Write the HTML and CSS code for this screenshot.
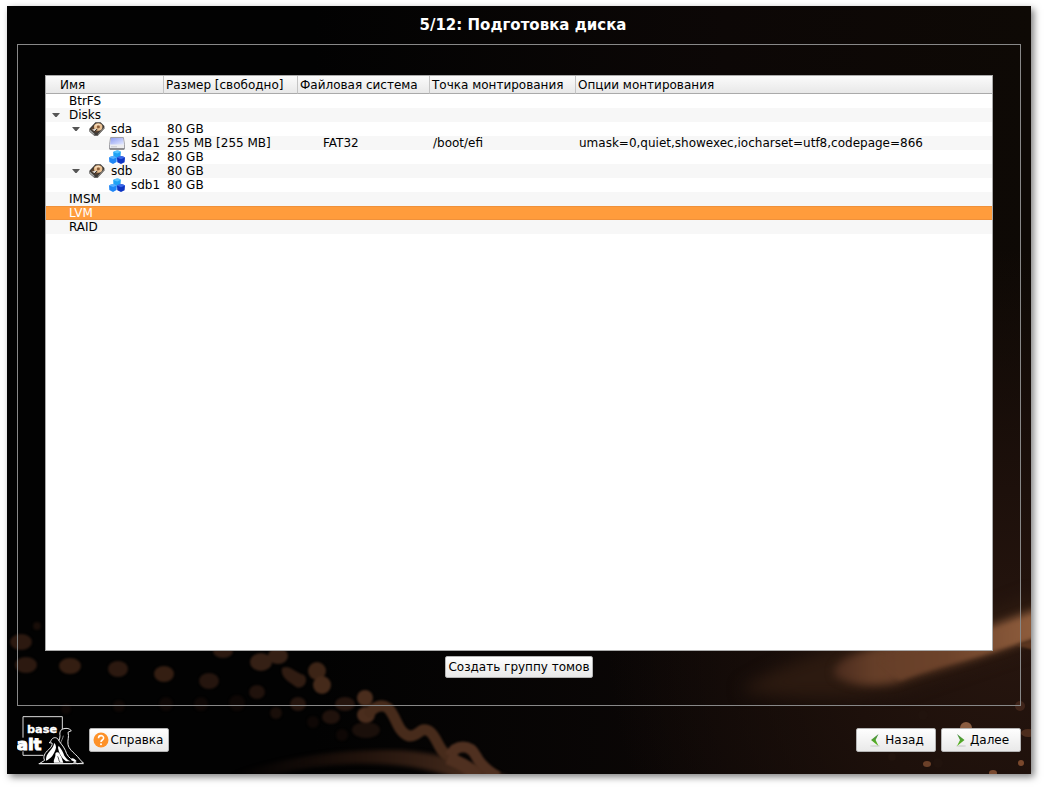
FILE: index.html
```html
<!DOCTYPE html>
<html lang="ru">
  <head>
    <meta charset="UTF-8" />
    <meta name="viewport" content="width=device-width, initial-scale=1.0" />
    <title>Подготовка диска</title>
    <link rel="stylesheet" href="styles.css">
  </head>
  <body>
    <!-- Общие значки -->
    <svg class="sprite" aria-hidden="true">
      <defs>
        <linearGradient id="gDrive" x1="0" y1="0" x2="1" y2="1">
          <stop offset="0" stop-color="#8d9cf0" />
          <stop offset="1" stop-color="#e4e9ff" />
        </linearGradient>
        <linearGradient id="gArrow" x1="0" y1="0" x2="0" y2="1">
          <stop offset="0" stop-color="#4b8a4b" />
          <stop offset="1" stop-color="#57bb12" />
        </linearGradient>
      </defs>
      <symbol id="disk" viewBox="0 0 16 14">
        <path d="M0.4 6.8 L6.4 0.2 L11.6 0.2 L15.4 4 L15.4 6.6 L8.8 13.8 L5.2 13.8 L0.4 9.6 Z" fill="#3c3a38" />
        <path d="M0.8 7.6 L5.4 11.8 L5.4 13.2 L0.8 9.4 Z" fill="#a9a9a6" />
        <path d="M8.8 12 L15.2 5.2 L15.2 6.6 L8.8 13.4 Z" fill="#8d8882" />
        <path d="M1.8 7 L7 1.2 L11.2 1.2 L14 4.2 L8.6 10.6 L5.8 10.6 Z" fill="#5d432e" />
        <ellipse cx="9.2" cy="5" rx="4.2" ry="3.7" fill="#e9c194" />
        <path d="M6.2 4.4 A3.2 2.8 0 0 1 11 2.8" fill="none" stroke="#fbe6cc" stroke-width="1" />
        <ellipse cx="9.4" cy="4.9" rx="1.5" ry="1.3" fill="#8a5c38" />
        <path d="M3 7.6 L7.6 6.6 L6 9.6 Z" fill="#dcd8d4" />
        <path d="M5.4 9.8 L8.4 6.8" stroke="#1e1c1a" stroke-width="1" />
      </symbol>
      <symbol id="part" viewBox="0 0 16 14">
        <path d="M1.6 1.5 H14.4 L15.5 8.5 V13 H0.5 V8.5 Z" fill="#ececef" stroke="#8d8d93" stroke-width="0.8" />
        <path d="M2 2 H14 L14.8 8.4 H1.2 Z" fill="url(#gDrive)" />
        <path d="M0.8 13 H15.2" stroke="#66666a" stroke-width="1.2" />
        <path d="M2 10.8 H8" stroke="#c6c6cc" stroke-width="1" />
      </symbol>
      <symbol id="cubes" viewBox="0 0 16 14">
        <path d="M4.2 2 Q8 -1 11.8 1.8 L11.6 6 L8 7.8 L4.4 6.2 Z" fill="#1fa2f5" />
        <path d="M4.2 2 Q8 -1 11.8 1.8 L8.2 3.4 Z" fill="#58c4ff" />
        <path d="M0 7.4 Q3.6 5 7.9 7.2 L7.6 12 L4 14 L0.3 12 Z" fill="#1f86f6" />
        <path d="M0 7.4 Q3.6 5 7.9 7.2 L4.2 9 Z" fill="#55b0ff" />
        <path d="M8 7.6 Q12 5 16 7.4 L15.6 12.2 L12 14 L8.3 12.2 Z" fill="#0d34c2" />
        <path d="M8 7.6 Q12 5 16 7.4 L12 9.2 Z" fill="#3a68ea" />
      </symbol>
      <symbol id="toggle" viewBox="0 0 8 4">
        <path d="M0 0 H8 L4.6 4 H3.4 Z" fill="#555" />
      </symbol>
    </svg>

    <div class="window">
      <svg class="backdrop" viewBox="7 6 1024 768" preserveAspectRatio="xMidYMax slice" aria-hidden="true">
        <defs>
          <linearGradient id="gBase" x1="0" y1="0" x2="1" y2="0">
            <stop offset="0.3" stop-color="#0c0807" stop-opacity="0" />
            <stop offset="0.7" stop-color="#0c0706" />
            <stop offset="1" stop-color="#0e0905" />
          </linearGradient>
          <radialGradient id="gGlow" cx="1010" cy="650" r="400" gradientUnits="userSpaceOnUse">
            <stop offset="0" stop-color="#26150e" />
            <stop offset="0.4" stop-color="#1d100b" />
            <stop offset="1" stop-color="#1d100b" stop-opacity="0" />
          </radialGradient>
          <linearGradient id="gStreak" x1="820" y1="0" x2="1031" y2="0" gradientUnits="userSpaceOnUse">
            <stop offset="0" stop-color="#41251a" />
            <stop offset="0.25" stop-color="#653e28" />
            <stop offset="0.6" stop-color="#6d432b" />
            <stop offset="1" stop-color="#8d5c3c" />
          </linearGradient>
          <linearGradient id="gArc" x1="230" y1="0" x2="500" y2="0" gradientUnits="userSpaceOnUse">
            <stop offset="0" stop-color="#1c0f0a" stop-opacity="0" />
            <stop offset="0.5" stop-color="#22130c" />
            <stop offset="1" stop-color="#4d3020" />
          </linearGradient>
          <filter id="b1" color-interpolation-filters="sRGB"><feGaussianBlur stdDeviation="1" /></filter>
          <filter id="b2" color-interpolation-filters="sRGB"><feGaussianBlur stdDeviation="2" /></filter>
          <filter id="b3" color-interpolation-filters="sRGB"><feGaussianBlur stdDeviation="4" /></filter>
          <filter id="b8" color-interpolation-filters="sRGB"><feGaussianBlur stdDeviation="8" /></filter>
        </defs>
        <rect x="7" y="6" width="1024" height="768" fill="#020202" />
        <rect x="7" y="6" width="1024" height="768" fill="url(#gBase)" />
        <rect x="600" y="250" width="431" height="524" fill="url(#gGlow)" />

        <path d="M740 690 C800 650 900 630 990 612 L1045 590 L1045 640 L900 690 C850 700 790 700 740 690 Z" fill="#2c1a10" filter="url(#b8)" />
        <path d="M834 675 C832 660 856 652 890 644 L990 626 L1045 606 L1045 634 L993 652 C960 664 925 672 898 682 C876 688 846 686 834 675 Z" fill="url(#gStreak)" filter="url(#b3)" />
        <path d="M880 660 L990 632 L1045 613 L1045 634 L993 651 C955 662 930 668 900 680 Z" fill="url(#gStreak)" filter="url(#b2)" />
        <path d="M1016 645 L1040 638 V652 Z" fill="#5a351f" filter="url(#b1)" />

        <g fill="#2c1910" filter="url(#b1)">
          <circle cx="37" cy="626" r="4" fill="#180d08" />
          <ellipse cx="21" cy="642" rx="11" ry="8" />
          <ellipse cx="26" cy="665" rx="11" ry="8" />
          <ellipse cx="70" cy="666" rx="11" ry="8" fill="#341e12" />
          <ellipse cx="118" cy="669" rx="10" ry="8" />
          <ellipse cx="164" cy="674" rx="10" ry="8" fill="#341e12" />
          <ellipse cx="209" cy="681" rx="10" ry="8" fill="#25150e" />
          <ellipse cx="223" cy="651" rx="10" ry="7" />
          <ellipse cx="261" cy="662" rx="11" ry="9" fill="#352015" />
          <ellipse cx="278" cy="656" rx="10" ry="8" fill="#352015" />
          <path d="M282 668 C290 664 294 672 304 675 C310 682 302 690 296 687 C290 682 280 678 282 668 Z" fill="#301c12" />
          <ellipse cx="317" cy="671" rx="9" ry="9" fill="#3c2416" />
          <ellipse cx="322" cy="685" rx="9" ry="9" fill="#452a1a" />
          <ellipse cx="257" cy="692" rx="8" ry="7" fill="#20120c" />
          <ellipse cx="298" cy="704" rx="8" ry="7" fill="#25150e" />
          <ellipse cx="345" cy="704" rx="10" ry="7" fill="#25150e" />
          <ellipse cx="331" cy="717" rx="9" ry="7" fill="#20120c" />
          <g fill="#0e0705">
            <circle cx="66" cy="709" r="5" />
            <circle cx="119" cy="706" r="6" />
            <circle cx="166" cy="704" r="7" />
            <circle cx="201" cy="704" r="7" />
            <circle cx="237" cy="703" r="8" />
            <circle cx="276" cy="713" r="6" fill="#190e09" />
            <circle cx="313" cy="722" r="6" />
            <circle cx="342" cy="735" r="6" />
            <ellipse cx="366" cy="730" rx="14" ry="8" fill="#1a0f0a" />
          </g>
        </g>

        <path d="M230 775 C290 756 340 750 390 750 C430 750 470 762 510 778 L455 778 C420 766 390 763 350 764 C310 766 290 770 270 776 Z" fill="url(#gArc)" filter="url(#b2)" />
        <g filter="url(#b1)">
          <circle cx="365" cy="698" r="8" fill="#4a2d1d" />
          <ellipse cx="366" cy="715" rx="9" ry="8" fill="#4a2d1d" />
          <path d="M370 712 C376 706 382 704 388 708 C397 717 397 732 409 736 C419 737 420 726 429 731 C438 737 438 752 450 757" fill="none" stroke="#472b1b" stroke-width="11" stroke-linecap="round" />
          <path d="M450 756 C456 744 470 744 476 756 C480 764 486 770 498 777" fill="none" stroke="#4f3020" stroke-width="11" />
          <path d="M448 758 C458 762 468 766 478 777" fill="none" stroke="#4f3020" stroke-width="13" />
        </g>

        <g fill="#4c2c1c">
          <circle cx="1020" cy="706" r="5" fill="#40251a" />
          <ellipse cx="966" cy="728" rx="6" ry="6" fill="#8a5c40" />
          <ellipse cx="1028" cy="733" rx="7" ry="4" />
          <ellipse cx="927" cy="764" rx="4" ry="3" fill="#6b4029" />
          <circle cx="1021" cy="763" r="3" fill="#7a482c" />
          <ellipse cx="993" cy="773" rx="4" ry="3" fill="#7a4a30" />
          <g fill="#21130d">
            <circle cx="923" cy="715" r="5" />
            <circle cx="892" cy="757" r="4" />
            <circle cx="938" cy="763" r="5" />
          </g>
        </g>
      </svg>

      <h1 class="title">5/12: Подготовка диска</h1>

      <main class="frame">
        <div class="tree">
          <table>
            <colgroup>
              <col class="col-name">
              <col class="col-size">
              <col class="col-fs">
              <col class="col-mount">
              <col>
            </colgroup>
            <thead>
              <tr>
                <th>Имя</th>
                <th>Размер [свободно]</th>
                <th>Файловая система</th>
                <th>Точка монтирования</th>
                <th>Опции монтирования</th>
              </tr>
            </thead>
            <tbody>
              <tr>
                <td><div class="node">BtrFS</div></td>
                <td></td><td></td><td></td><td></td>
              </tr>
              <tr>
                <td><div class="node"><button class="toggle" aria-label="Свернуть Disks"><svg><use href="#toggle" /></svg></button>Disks</div></td>
                <td></td><td></td><td></td><td></td>
              </tr>
              <tr>
                <td><div class="node level1"><button class="toggle" aria-label="Свернуть sda"><svg><use href="#toggle" /></svg></button><svg class="icon"><use href="#disk" /></svg>sda</div></td>
                <td>80 GB</td><td></td><td></td><td></td>
              </tr>
              <tr>
                <td><div class="node level2"><svg class="icon"><use href="#part" /></svg>sda1</div></td>
                <td>255 MB [255 MB]</td><td class="fs">FAT32</td><td>/boot/efi</td><td>umask=0,quiet,showexec,iocharset=utf8,codepage=866</td>
              </tr>
              <tr>
                <td><div class="node level2"><svg class="icon"><use href="#cubes" /></svg>sda2</div></td>
                <td>80 GB</td><td></td><td></td><td></td>
              </tr>
              <tr>
                <td><div class="node level1"><button class="toggle" aria-label="Свернуть sdb"><svg><use href="#toggle" /></svg></button><svg class="icon"><use href="#disk" /></svg>sdb</div></td>
                <td>80 GB</td><td></td><td></td><td></td>
              </tr>
              <tr>
                <td><div class="node level2"><svg class="icon"><use href="#cubes" /></svg>sdb1</div></td>
                <td>80 GB</td><td></td><td></td><td></td>
              </tr>
              <tr>
                <td><div class="node">IMSM</div></td>
                <td></td><td></td><td></td><td></td>
              </tr>
              <tr class="selected">
                <td><div class="node">LVM</div></td>
                <td></td><td></td><td></td><td></td>
              </tr>
              <tr>
                <td><div class="node">RAID</div></td>
                <td></td><td></td><td></td><td></td>
              </tr>
            </tbody>
          </table>
        </div>
        <button class="btn btn-create">Создать группу томов</button>
      </main>

      <footer class="footer">
        <svg class="logo" viewBox="21 30 201 150" role="img" aria-label="base alt">
          <path d="M39 98 V35 H157 V75" fill="none" stroke="#ddd" stroke-width="3" />
          <path d="M39 139 V151 H100" fill="none" stroke="#ddd" stroke-width="3" />
          <text x="51" y="84" class="logo-base">base</text>
          <text x="20" y="134" class="logo-alt">alt</text>
          <!-- дальний котик -->
          <path d="M140 120 C146 110 150 102 150 92 C148 80 152 73 162 71 C170 69 178 70 184 77 L174 82 C178 96 172 104 174 118 C176 132 190 142 202 154 C208 162 214 168 220 174 L202 176 L190 170 L150 174 Z" fill="#000" stroke="#eee" stroke-width="3" />
          <path d="M160 92 C158 102 154 106 152 114" fill="none" stroke="#ccc" stroke-width="2" />
          <!-- ближний котик -->
          <path d="M122 110 C124 100 134 94 143 101 C148 112 160 122 166 136 C170 150 178 160 190 166 C196 170 192 176 184 176 L88 176 L104 166 C98 156 104 144 116 134 C124 126 128 120 126 114 L117 113 Z" fill="#000" stroke="#eee" stroke-width="3" />
          <path d="M132 114 C132 128 118 138 110 152 C108 158 108 162 108 167 C122 162 134 146 138 128 C138 122 136 116 132 114 Z" fill="#fff" />
          <path d="M146 122 C154 132 160 142 163 152 C168 160 174 166 182 169 L168 169 C154 158 146 142 144 128 Z" fill="#fff" />
          <path d="M184 166 C182 156 192 158 200 168 L196 171 Z" fill="#fff" />
          <path d="M132 173 C129 164 138 156 136 146 C140 138 150 142 150 150 C156 156 156 164 160 173 Z" fill="#fff" />
          <path d="M143 154 C147 160 145 166 150 171" fill="none" stroke="#000" stroke-width="2" />
          <path d="M86 176 H221" stroke="#eee" stroke-width="3" />
        </svg>
        <button class="btn btn-help">
          <svg viewBox="0 0 16 16" aria-hidden="true">
            <circle cx="8" cy="8" r="7.5" fill="#fd9128" />
            <path d="M5.5 6.2 C5.5 2.8 10.6 2.9 10.6 6 C10.6 8 8 8 8 10" fill="none" stroke="#fff" stroke-width="1.6" />
            <circle cx="8" cy="12.2" r="1" fill="#fff" />
          </svg>
          Справка
        </button>
        <div class="nav">
          <button class="btn">
            <svg viewBox="0 0 16 16" aria-hidden="true">
              <ellipse cx="7" cy="14" rx="5" ry="1" fill="#d8d8d8" />
              <path d="M10.5 2 L3 8 L10.5 14 L7.6 8 Z" fill="url(#gArrow)" />
            </svg>
            Назад
          </button>
          <button class="btn">
            <svg viewBox="0 0 16 16" aria-hidden="true">
              <ellipse cx="8" cy="14" rx="5" ry="1" fill="#d8d8d8" />
              <path d="M4 2 L11.5 8 L4 14 L7 8 Z" fill="url(#gArrow)" />
            </svg>
            Далее
          </button>
        </div>
      </footer>
    </div>
  </body>
</html>
```

FILE: styles.css
```css
* {
  margin: 0;
  padding: 0;
  box-sizing: border-box;
}

body {
  display: flex;
  min-height: 100vh;
  padding: 6px 13px 14px 7px;
  background: #fff;
  color: #000;
  font-family: "DejaVu Sans", sans-serif;
  font-size: 12px;
}

.sprite {
  position: absolute;
  width: 0;
  height: 0;
}

.window {
  position: relative;
  z-index: 0;
  flex: 1;
  min-width: 0;
  display: flex;
  flex-direction: column;
  background: #000;
  box-shadow: 3px 3px 7px rgba(0, 0, 0, 0.5);
}

/* Фоновый рисунок */
.backdrop {
  position: absolute;
  inset: 0;
  z-index: -1;
  width: 100%;
  height: 100%;
}

.title {
  height: 38px;
  padding-left: 8px;
  line-height: 38px;
  text-align: center;
  color: #fff;
  font-size: 15px;
  font-weight: bold;
}

.frame {
  flex: 1;
  display: flex;
  flex-direction: column;
  align-items: center;
  gap: 5px;
  margin: 0 10px;
  padding: 30px 27px 27px;
  border: 1px solid #888;
}

/* Дерево дисков */
.tree {
  flex: 1;
  width: 100%;
  overflow: auto;
  background: #fff;
  border: 1px solid #aaa;
}

table {
  width: 100%;
  table-layout: fixed;
  border-spacing: 0;
}

.col-name {
  width: 118px;
}

.col-size {
  width: 134px;
}

.col-fs {
  width: 132px;
}

.col-mount {
  width: 146px;
}

th {
  height: 18px;
  padding: 2px 2px 0;
  line-height: 15px;
  text-align: left;
  font-weight: normal;
  white-space: nowrap;
  background: linear-gradient(#fbfbfb, #e8e8e8);
  border-right: 1px solid #c4c4c4;
  border-bottom: 1px solid #aaa;
}

th:first-child {
  padding-left: 14px;
}

th:last-child {
  border-right: none;
}

td {
  height: 14px;
  padding: 0 3px;
  line-height: 14px;
  white-space: nowrap;
}

td:first-child {
  padding: 0;
}

td.fs {
  padding-left: 25px;
}

tbody tr:nth-child(even) {
  background: #f7f7f7;
}

tbody tr.selected {
  color: #fff;
  background: #ff9c3c;
}

.selected td {
  box-shadow: inset 0 1px #f0913a, inset 0 -1px #f0913a;
}

.node {
  display: flex;
  align-items: center;
  height: 14px;
  padding-left: 23px;
}

.level1 {
  padding-left: 43px;
}

.level2 {
  padding-left: 63px;
}

.toggle {
  display: flex;
  align-items: center;
  justify-content: center;
  width: 14px;
  height: 14px;
  margin-left: -20px;
  margin-right: 6px;
  background: none;
  border: none;
}

.toggle svg {
  width: 8px;
  height: 4px;
}

.icon {
  flex: none;
  width: 16px;
  height: 14px;
  margin-right: 6px;
}

/* Кнопки */
.btn {
  display: flex;
  align-items: center;
  justify-content: center;
  gap: 2px;
  min-width: 80px;
  height: 24px;
  padding: 0 3px;
  color: #000;
  font-family: inherit;
  font-size: 12px;
  white-space: nowrap;
  background: linear-gradient(#fefefe, #e9e9e9);
  border: 1px solid #b4b4b4;
  border-radius: 2px;
}

.btn svg {
  flex: none;
  width: 16px;
  height: 16px;
}

.btn-create {
  height: 22px;
  padding: 0 2px;
}

.btn-help {
  padding: 0 4px 0 2px;
}

.footer {
  display: flex;
  align-items: center;
  height: 68px;
  padding: 0 10px;
}

.logo {
  width: 67px;
  height: 50px;
  margin-right: 5px;
}

.logo text {
  fill: #fff;
  stroke: #fff;
  font-weight: bold;
}

.logo-base {
  font-size: 34px;
  stroke-width: 1px;
}

.logo-alt {
  font-size: 50px;
  stroke-width: 3px;
}

.nav {
  display: flex;
  gap: 5px;
  margin-left: auto;
}

.nav .btn {
  gap: 1px;
}
```
